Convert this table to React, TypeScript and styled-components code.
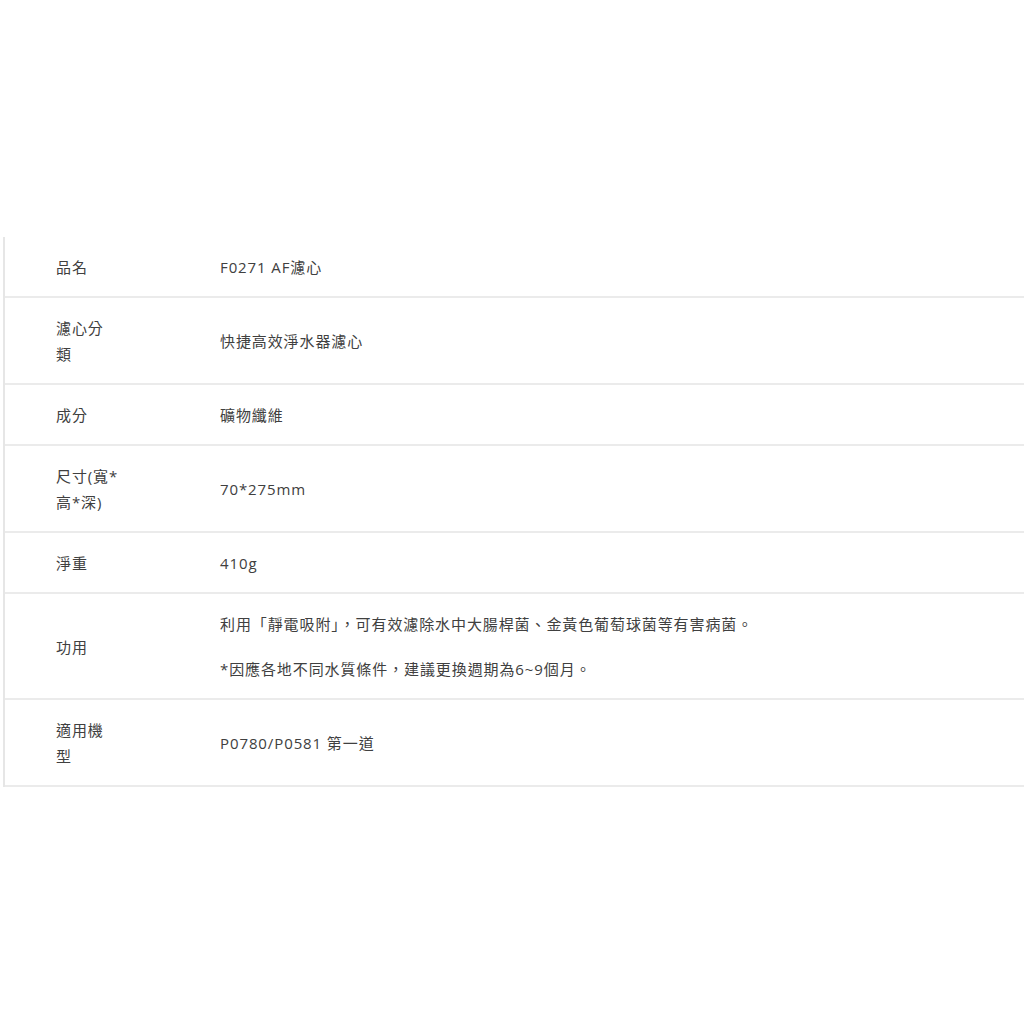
import React from "react";
import styled, { createGlobalStyle } from "styled-components";

const Global = createGlobalStyle`
  html, body { margin: 0; padding: 0; background: #ffffff; }
  body {
    font-family: "Open Sans", "Noto Sans CJK TC", sans-serif;
    color: #404040;
  }
`;

const Page = styled.div`
  padding-top: 237px;
  padding-left: 3px;
  width: 1024px;
  box-sizing: border-box;
`;

const Table = styled.div`
  border-left: 2px solid #e6e6e6;
  display: flex;
  flex-direction: column;
`;

const Row = styled.div`
  display: grid;
  grid-template-columns: 215px 1fr;
  align-items: center;
  padding: 17px 0 16px;
  border-bottom: 2px solid #ebebeb;
`;

const Label = styled.div`
  padding-left: 51px;
  font-size: 15px;
  line-height: 26px;
  letter-spacing: 0.9px;
  white-space: pre-line;
`;

const Value = styled.div`
  font-size: 15px;
  line-height: 26px;
  letter-spacing: 0.9px;
  display: flex;
  flex-direction: column;
  gap: 19px;
`;

const Para = styled.p`
  margin: 0;
`;

const rows: { label: string; value: string[] }[] = [
  { label: "品名", value: ["F0271 AF濾心"] },
  { label: "濾心分\n類", value: ["快捷高效淨水器濾心"] },
  { label: "成分", value: ["礦物纖維"] },
  { label: "尺寸(寬*\n高*深)", value: ["70*275mm"] },
  { label: "淨重", value: ["410g"] },
  {
    label: "功用",
    value: [
      "利用「靜電吸附」，可有效濾除水中大腸桿菌、金黃色葡萄球菌等有害病菌。",
      "*因應各地不同水質條件，建議更換週期為6~9個月。",
    ],
  },
  { label: "適用機\n型", value: ["P0780/P0581 第一道"] },
];

export default function App() {
  return (
    <>
      <Global />
      <Page>
        <Table>
          {rows.map((r) => (
            <Row key={r.label}>
              <Label>{r.label}</Label>
              <Value>
                {r.value.map((v) => (
                  <Para key={v}>{v}</Para>
                ))}
              </Value>
            </Row>
          ))}
        </Table>
      </Page>
    </>
  );
}
